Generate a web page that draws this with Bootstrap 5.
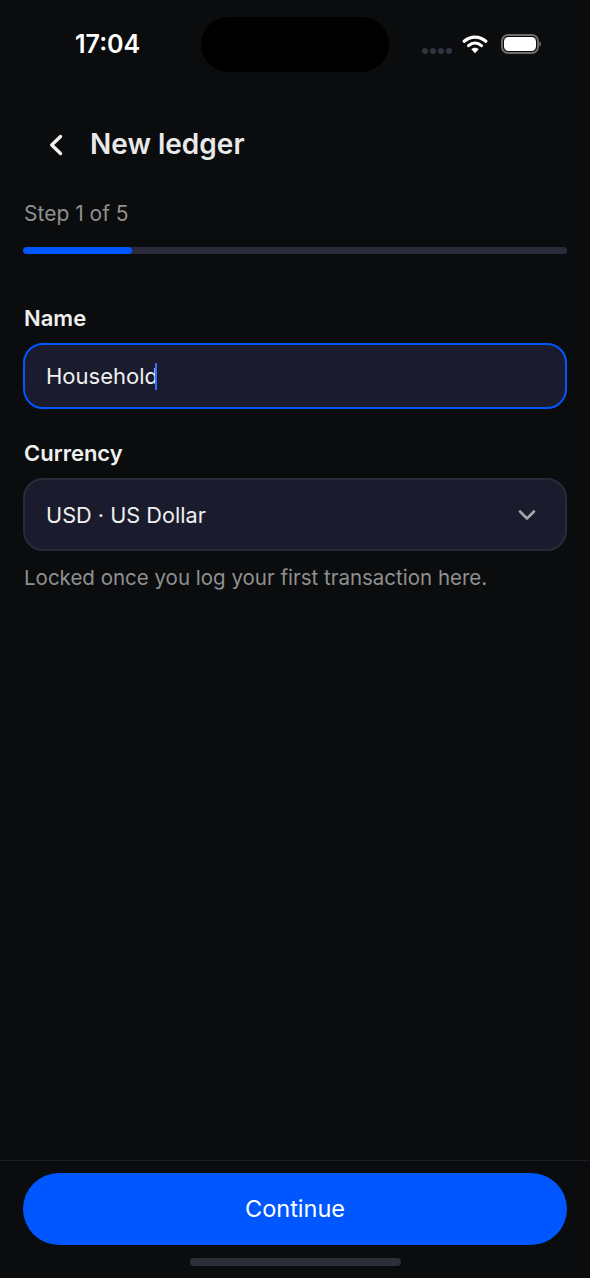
<!DOCTYPE html>
<html lang="en">
<head>
<meta charset="utf-8">
<title>New ledger</title>
<link href="https://cdn.jsdelivr.net/npm/bootstrap@5.3.0/dist/css/bootstrap.min.css" rel="stylesheet">
<style>
html,body{height:100%;margin:0}
body{background:#0a0c0e;font-family:Inter,"Liberation Sans",sans-serif;color:#f2f2f2}
.screen{position:relative;height:1278px;width:590px;overflow:hidden}
.status{height:88px;padding:0 49px 0 75px}
.clock{font-size:25px;font-weight:600;color:#fff;line-height:1}
.island{position:absolute;left:201px;top:17px;width:188px;height:55px;border-radius:28px;background:#000}
.sig i{display:block;width:6px;height:6px;border-radius:50%;background:#33333f}
.sig{gap:2px;margin-top:14px;margin-right:10px}
.batt-ic{margin-left:12px}
.head{height:72px;margin-top:21px;padding:0 23px}
.backbtn{width:66px;height:46px;margin-right:1px}
.title{font-size:28px;font-weight:600;color:#e9e9e9;margin:0}
.content{padding:0 23px}
.stepline{font-size:21px;color:#909090;line-height:24px;margin-top:21px;margin-bottom:21px;padding-left:1px}
.track{height:7px;background:#2a2a3a;border-radius:4px}
.track .progress-bar{background:#0057ff;border-radius:4px}
.flabel{font-size:22px;font-weight:600;color:#f0f0f0;line-height:26px;margin:0 0 12px;padding-left:1px}
.fieldone{margin-top:51px}
.fieldtwo{margin-top:31px}
.inputbox.form-control{background:#1a1c2e;border:2px solid #0057ff;border-radius:20px;height:66px;padding:0 21px;color:#f0f0f0;font-size:22px;box-shadow:none}
.cursor{display:inline-block;width:2px;height:27px;background:#3a6cff;margin-left:-3px}
.selectbox.form-select{background-color:#1a1c2e;border:2px solid #2a2a3a;border-radius:20px;height:73px;margin-top:1px;padding:2px 60px 0 21px;color:#f0f0f0;font-size:21.7px;font-family:inherit;background-image:url("data:image/svg+xml,%3Csvg xmlns='http://www.w3.org/2000/svg' viewBox='0 0 18 12'%3E%3Cpath d='M2 2.5l7 7 7-7' fill='none' stroke='%23a5a5aa' stroke-width='2.6' stroke-linecap='round' stroke-linejoin='round'/%3E%3C/svg%3E");background-repeat:no-repeat;background-position:right 29px center;background-size:18px 12px;box-shadow:none}
.hint{font-size:20.500px;color:#909090;line-height:26px;margin-top:14px;padding-left:1px}
.foot{border-top:1px solid #1c1c2a;padding:12px 23px 33px}
.cta.btn{display:block;width:100%;height:72px;border-radius:36px;background:#0057ff;border:0;color:#fff;font-size:23.5px;font-weight:400}
.homebar{position:absolute;left:190px;top:1258px;width:211px;height:8px;border-radius:4px;background:#2e2e3a}
</style>
</head>
<body>
<div class="screen d-flex flex-column">
  <div class="status d-flex align-items-center justify-content-between">
    <div class="clock">17:04</div>
    <div class="d-flex align-items-center">
      <div class="sig d-flex"><i></i><i></i><i></i><i></i></div>
      <svg width="26" height="20" viewBox="0 0 26 20" aria-hidden="true">
        <path d="M2.200 7.300C8.400 1.700 17.600 1.700 23.800 7.300" fill="none" stroke="#fff" stroke-width="3.200" stroke-linecap="round"/>
        <path d="M6.600 11.600C10.400 8.400 15.600 8.400 19.400 11.600" fill="none" stroke="#fff" stroke-width="3.200" stroke-linecap="round"/>
        <path d="M9.300 15.200C11.500 13.200 14.500 13.200 16.700 15.200L13 19.200Z" fill="#fff"/>
      </svg>
      <svg width="41" height="22" viewBox="0 0 41 22" class="batt-ic" aria-hidden="true">
        <rect x="2" y="2" width="36" height="18" rx="6" fill="none" stroke="#6d6d70" stroke-width="2"/>
        <rect x="4" y="4" width="32" height="14" rx="4.500" fill="#fff"/>
        <path d="M39.300 8.500c1.200.3 1.700 1.200 1.700 2.500s-.5 2.200-1.700 2.500z" fill="#6d6d70"/>
      </svg>
    </div>
  </div>
  <div class="island"></div>
  <div class="head d-flex align-items-center">
    <div class="backbtn d-flex align-items-center justify-content-center">
      <svg width="16" height="24" viewBox="0 0 16 24" aria-hidden="true"><path d="M12.500 3.500L3.700 12l8.800 8.500" fill="none" stroke="#f2f2f2" stroke-width="3.400" stroke-linecap="round" stroke-linejoin="round"/></svg>
    </div>
    <h1 class="title">New ledger</h1>
  </div>
  <div class="content flex-grow-1">
    <div class="stepline">Step 1 of 5</div>
    <div class="progress track"><div class="progress-bar" role="progressbar" style="width:20%" aria-valuenow="20" aria-valuemin="0" aria-valuemax="100"></div></div>
    <div class="fieldone">
      <div class="flabel">Name</div>
      <div class="form-control inputbox d-flex align-items-center"><span>Household</span><span class="cursor"></span></div>
    </div>
    <div class="fieldtwo">
      <div class="flabel">Currency</div>
      <select class="form-select selectbox" aria-label="Currency"><option>USD · US Dollar</option></select>
      <div class="hint">Locked once you log your first transaction here.</div>
    </div>
  </div>
  <div class="foot">
    <button type="button" class="btn cta">Continue</button>
  </div>
  <div class="homebar"></div>
</div>
<script src="https://cdn.jsdelivr.net/npm/bootstrap@5.3.0/dist/js/bootstrap.bundle.min.js"></script>
</body>
</html>
